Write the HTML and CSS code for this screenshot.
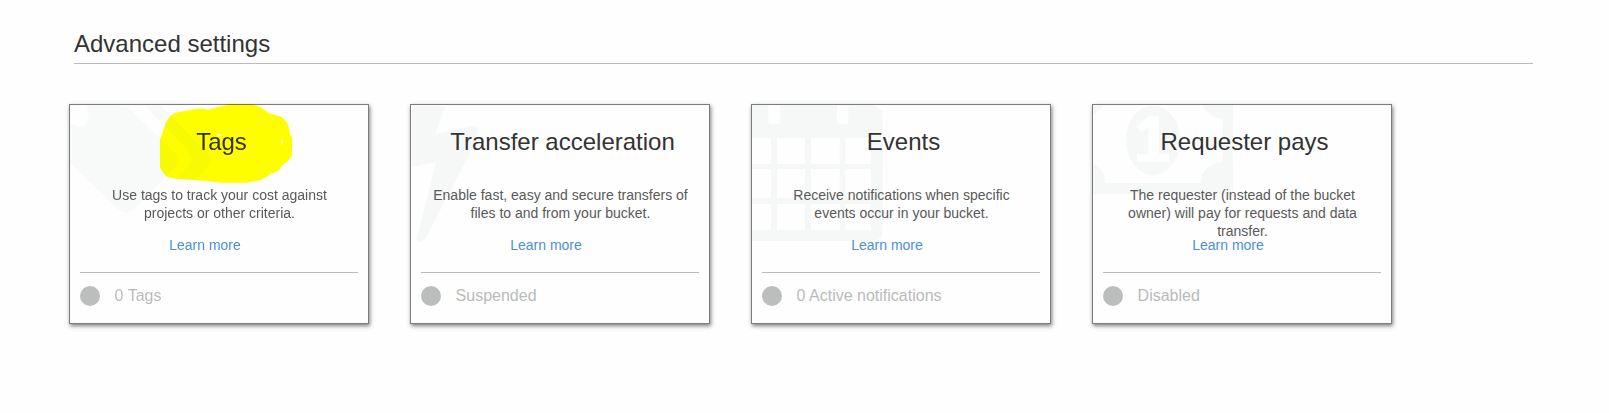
FILE: index.html
```html
<!DOCTYPE html>
<html lang="en">
<head>
<meta charset="utf-8">
<title>Advanced settings</title>
<link rel="stylesheet" href="styles.css">
</head>
<body>
<main class="page">
  <h1 class="heading">Advanced settings</h1>
  <div class="cards">
    <section class="card">
      <svg class="art art-tags" viewBox="30 30 894 654"><path d="M78 30H196L341 170Q365 195 341 220L222 343Q200 360 175 343L30 203V78A28 28 0 0 0 84 55Q84 40 78 30Z"/><path d="M253 30H300L437 170Q462 196 437 220L405 255H342L384 216Q402 196 384 165Z"/></svg>
      <h2 class="title">Tags</h2>
      <p class="desc">Use tags to track your cost against projects or other criteria.</p>
      <a class="link">Learn more</a>
      <div class="status"><span class="dot"></span><span>0 Tags</span></div>
      <svg class="marker" viewBox="27 27 900 660"><path fill-rule="evenodd" d="M329 65L345 53L390 45L410 41H430L444 44L474 36L512 28H578L602 37L628 55L665 66L681 82L687 98L690 118L696 128V182L684 198L665 212L658 226L634 236L605 254L576 260L558 263H482L440 258L390 254L345 251L322 246L308 232L300 216V134L309 108L317 85Z M467 119L480 117L486 123L475 122Z M663 132L669 142L664 150Z"/></svg>
    </section>
    <section class="card">
      <svg class="art" viewBox="33 30 894 654"><path d="M36 33H137L105 118L215 93Q240 92 233 114L205 184L77 428Q68 444 54 439Q48 434 53 420L109 200L36 216Z"/></svg>
      <h2 class="title">Transfer acceleration</h2>
      <p class="desc">Enable fast, easy and secure transfers of files to and from your bucket.</p>
      <a class="link">Learn more</a>
      <div class="status"><span class="dot"></span><span>Suspended</span></div>
    </section>
    <section class="card">
      <svg class="art" viewBox="36 30 894 654"><path fill-rule="evenodd" d="M36 30H85V78Q85 87 94 87H111Q120 87 120 78V30H291V78Q291 87 300 87H316Q325 87 325 78V30H398Q428 35 428 68V403Q428 438 396 438H36V405H93V327H36V309H93V222H36V207H93V129H36Z M111 129V207H195V129Z M213 129V207H299V129Z M316 129V207H393V129Z M111 222V309H195V222Z M213 222V309H299V222Z M316 222V309H393V222Z M111 327V405H195V327Z M213 327V405H299V327Z M316 327V405H393V327Z"/></svg>
      <h2 class="title">Events</h2>
      <p class="desc">Receive notifications when specific events occur in your bucket.</p>
      <a class="link">Learn more</a>
      <div class="status"><span class="dot"></span><span>0 Active notifications</span></div>
    </section>
    <section class="card">
      <svg class="art" viewBox="39 30 894 654"><path fill-rule="evenodd" d="M39 30H70Q62 48 39 57Z M367 30H459V297H39V207Q74 222 75 264H363Q364 207 428 201V72Q382 66 367 30Z M219 32A81 104 0 1 1 219 240A81 104 0 1 1 219 32Z M206 62H236V178H267V201H171V178H205V98L183 112L170 94Z"/></svg>
      <h2 class="title">Requester pays</h2>
      <p class="desc">The requester (instead of the bucket owner) will pay for requests and data transfer.</p>
      <a class="link">Learn more</a>
      <div class="status"><span class="dot"></span><span>Disabled</span></div>
    </section>
  </div>
</main>
</body>
</html>
```
FILE: styles.css
```css
* { box-sizing: border-box; }
body {
  margin: 0;
  background: #fefefe;
  font-family: "Liberation Sans", Arial, sans-serif;
}
.page { min-height: 413px; padding: 28px 76px 0 69px; }
.heading {
  margin: 0 0 0 5px;
  height: 36px;
  border-bottom: 1px solid #b9bbba;
  font-size: 24px;
  font-weight: 400;
  line-height: 32px;
  color: #333;
}
.cards { display: flex; gap: 41px; margin-top: 40px; }
.card {
  position: relative;
  isolation: isolate;
  display: flex;
  flex-direction: column;
  width: 300px;
  height: 220px;
  padding: 0 10px;
  border: 1px solid #7c7c7c;
  background: #fefefe;
  box-shadow: 1px 2px 4px rgba(0, 0, 0, .5);
}
.art {
  position: absolute;
  inset: 0;
  width: 298px;
  height: 218px;
  fill: #f5f8f7;
}
.art-tags { fill: #f7faf9; }
.marker {
  position: absolute;
  top: -1px;
  left: -1px;
  width: 300px;
  height: 220px;
  fill: #ff0;
  mix-blend-mode: multiply;
  pointer-events: none;
}
.title, .desc, .link, .status { position: relative; }
.title {
  margin: 23px 0 0 5px;
  height: 28px;
  font-size: 24px;
  font-weight: 400;
  line-height: 28px;
  text-align: center;
  color: #333;
}
.desc {
  height: 54px;
  margin: 30px 9px 0 10px;
  font-size: 14px;
  line-height: 18px;
  text-align: center;
  color: #595959;
}
.link {
  height: 18px;
  margin: -4px 28px 0 0;
  font-size: 14px;
  line-height: 18px;
  text-align: center;
  color: #4a90d9;
}
.status {
  display: flex;
  align-items: center;
  gap: 14.6px;
  height: 47px;
  margin-top: 18px;
  border-top: 1px solid #b9bbba;
  font-size: 16px;
  color: #b9bbba;
}
.dot {
  width: 20px;
  height: 20px;
  border-radius: 50%;
  background: #bcbebd;
}
```
